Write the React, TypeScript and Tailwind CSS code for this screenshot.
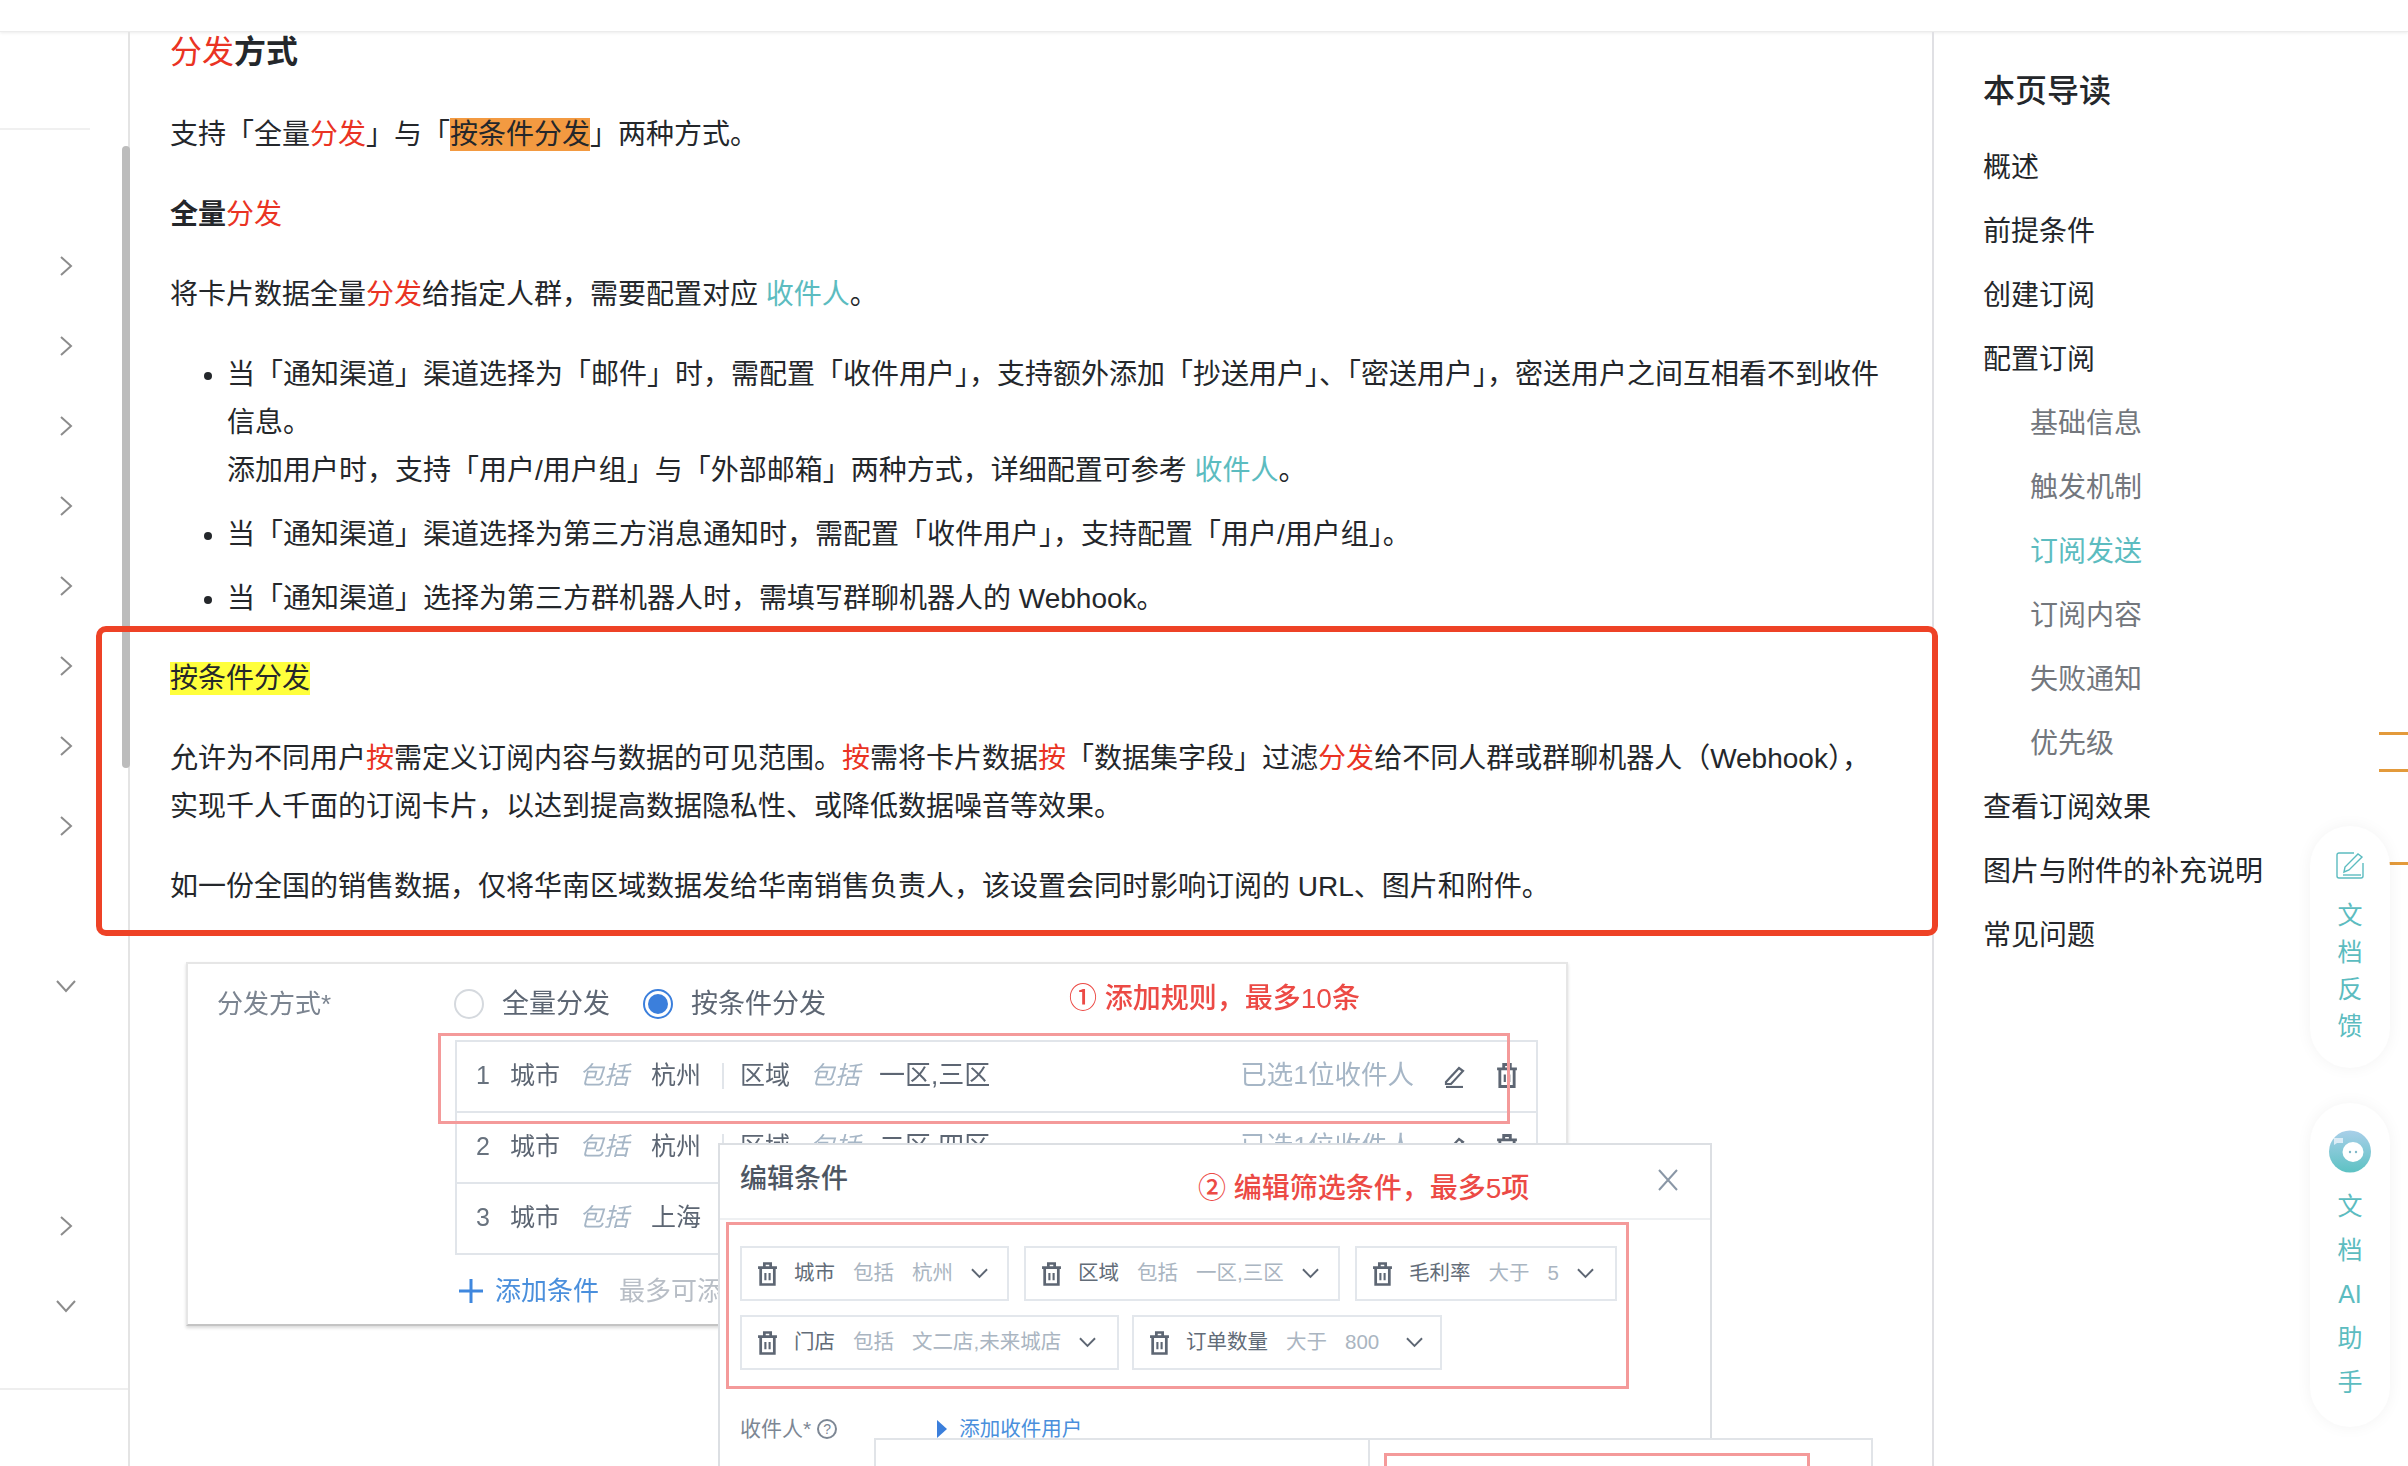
const NAV_ROWS = ["r", "r", "r", "r", "r", "r", "r", "r", "", "d", "", "", "r", "d"];

const TOC = [
  { label: "概述" },
  { label: "前提条件" },
  { label: "创建订阅" },
  { label: "配置订阅" },
  { label: "基础信息", sub: true },
  { label: "触发机制", sub: true },
  { label: "订阅发送", sub: true, active: true },
  { label: "订阅内容", sub: true },
  { label: "失败通知", sub: true },
  { label: "优先级", sub: true },
  { label: "查看订阅效果" },
  { label: "图片与附件的补充说明" },
  { label: "常见问题" },
];

const RULES = [
  { n: "1", city: "杭州", area: "一区,三区" },
  { n: "2", city: "杭州", area: "二区,四区" },
  { n: "3", city: "上海", area: "" },
];

function Red({ children }: { children: React.ReactNode }) {
  return <span className="text-[#ea3323]">{children}</span>;
}

function Link({ children }: { children: React.ReactNode }) {
  return <span className="text-[#5cbcc0]">{children}</span>;
}

function Trash({ className }: { className: string }) {
  return (
    <svg viewBox="0 0 20 24" fill="none" stroke="#5d6673" strokeWidth="2.6" className={className}>
      <path d="M1 6h18M7 5V2h6v3" />
      <path d="M3.5 7v15h13V7" />
      <path d="M8 11v7M12 11v7" strokeWidth="2" />
    </svg>
  );
}

function Pencil() {
  return (
    <svg viewBox="0 0 24 24" fill="none" stroke="#5d6673" strokeWidth="2.2" className="w-[24px] h-[24px]">
      <path d="M3 18 16 4l4 3L8 20H3z" />
      <path d="M3 23h17" />
    </svg>
  );
}

function Chevron({ dir }: { dir: string }) {
  if (dir === "d") {
    return (
      <svg viewBox="0 0 20 13" fill="none" stroke="#8c8c8c" strokeWidth="2" className="w-[20px] h-[13px] -ml-[4px]">
        <path d="M1 1l9 10 9-10" />
      </svg>
    );
  }
  return (
    <svg viewBox="0 0 13 20" fill="none" stroke="#8c8c8c" strokeWidth="2" className="w-[13px] h-[20px]">
      <path d="M1 1l10 9-10 9" />
    </svg>
  );
}

function ChipArrow() {
  return (
    <svg viewBox="0 0 18 11" fill="none" stroke="#5d6673" strokeWidth="2" className="w-[17px] h-[11px] shrink-0">
      <path d="M1 1l8 8 8-8" />
    </svg>
  );
}

function Chip({ w, label, op, value, gap }: { w: string; label: string; op: string; value: string; gap: string }) {
  return (
    <div className={`${w} h-[55px] border-2 border-[#e3e7ec] flex items-center pl-[15px] text-[20.5px] shrink-0`}>
      <Trash className="w-[21px] h-[26px] shrink-0" />
      <span className="ml-[16px] text-[#626c78]">{label}</span>
      <span className="ml-[18px] text-[#aab5c1]">{op}</span>
      <span className="ml-[18px] text-[#aab5c1] whitespace-nowrap">{value}</span>
      <span className={gap}>
        <ChipArrow />
      </span>
    </div>
  );
}

function RuleRow({ n, city, area }: { n: string; city: string; area: string }) {
  return (
    <div className="h-[71px] border-b-2 border-[#e1e5ea] flex items-center pl-[19px] text-[25px] text-[#5d6673] pb-[2px]">
      <span className="w-[34px] text-[#68727e]">{n}</span>
      <span className="w-[69px]">城市</span>
      <span className="w-[72px] italic text-[#a6b6c6]">包括</span>
      <span className="w-[71px]">{city}</span>
      {area && (
        <>
          <span className="w-[2px] h-[26px] bg-[#e1e5ea]" />
          <span className="ml-[16px] w-[70px]">区域</span>
          <span className="w-[69px] italic text-[#a6b6c6]">包括</span>
          <span className="text-[26px]">{area}</span>
          <span className="ml-auto text-[#a6b6c6] text-[26.5px]">已选1位收件人</span>
          <span className="ml-[29px]">
            <Pencil />
          </span>
          <span className="ml-[29px] mr-[18px]">
            <Trash className="w-[22px] h-[27px]" />
          </span>
        </>
      )}
    </div>
  );
}

function Screenshot() {
  return (
    <div className="relative ml-[16px] mt-[51px] w-[1382px] h-[364px] border-2 border-[#e6e6e6] border-b-[#c4c4c4] shadow-[0_2px_3px_rgba(0,0,0,0.15)] text-[25px] blur-[0.4px]">
      <div className="mt-[20px] pl-[29px] h-[40px] flex items-center">
        <span className="w-[237px] text-[#7b8490] text-[26px]">分发方式*</span>
        <span className="w-[30px] h-[30px] rounded-full border-2 border-[#d5d9de]" />
        <span className="ml-[18px] w-[105px] text-[#5d6673] text-[27px] whitespace-nowrap">全量分发</span>
        <span className="ml-[36px] w-[30px] h-[30px] rounded-full border-2 border-[#3b7fdc] flex items-center justify-center">
          <span className="w-[20px] h-[20px] rounded-full bg-[#3b7fdc]" />
        </span>
        <span className="ml-[18px] w-[131px] text-[#5d6673] text-[27px] whitespace-nowrap">按条件分发</span>
        <span className="ml-[247px] -mt-[10px] text-[#ec4a45] text-[28px] font-medium whitespace-nowrap">① 添加规则，最多10条</span>
      </div>

      <div className="ml-[267px] mt-[16px] w-[1083px] border-2 border-b-0 border-[#e1e5ea]">
        {RULES.map((r) => (
          <RuleRow key={r.n} n={r.n} city={r.city} area={r.area} />
        ))}
      </div>

      <div className="ml-[271px] mt-[18px] h-[36px] flex items-center text-[26px] whitespace-nowrap">
        <svg viewBox="0 0 24 24" stroke="#3f87de" strokeWidth="3" className="w-[24px] h-[24px] shrink-0">
          <path d="M12 0v24M0 12h24" />
        </svg>
        <span className="ml-[12px] text-[#4a8fdc]">添加条件</span>
        <span className="ml-[20px] text-[#b8bec6]">最多可添加10条</span>
      </div>

      {/* red mark on the first rule */}
      <div className="absolute left-[250px] top-[69px] w-[1072px] h-[91px] border-[3px] border-[#f49a9a]" />

      {/* edit dialog, lies over the rule list */}
      <div className="absolute left-[530px] top-[179px] w-[994px] h-[400px] bg-white border-2 border-[#dcdfe3]">
        <div className="h-[75px] border-b-2 border-[#eef0f2] flex items-center pl-[20px] pb-[4px]">
          <span className="w-[458px] text-[27px] font-medium text-[#4d5662]">编辑条件</span>
          <span className="mt-[18px] text-[28px] font-medium text-[#ec4a45] whitespace-nowrap">② 编辑筛选条件，最多5项</span>
          <svg viewBox="0 0 20 22" fill="none" stroke="#8a97a6" strokeWidth="2" className="ml-[129px] w-[20px] h-[22px]">
            <path d="M1 1l18 20M19 1 1 21" />
          </svg>
        </div>
        <div className="pl-[20px] pt-[26px] flex flex-col gap-[14px]">
          <div className="flex gap-[15px]">
            <Chip w="w-[269px]" label="城市" op="包括" value="杭州" gap="ml-[18px]" />
            <Chip w="w-[316px]" label="区域" op="包括" value="一区,三区" gap="ml-[18px]" />
            <Chip w="w-[262px]" label="毛利率" op="大于" value="5" gap="ml-[18px]" />
          </div>
          <div className="flex gap-[13px]">
            <Chip w="w-[379px]" label="门店" op="包括" value="文二店,未来城店" gap="ml-[18px]" />
            <Chip w="w-[310px]" label="订单数量" op="大于" value="800" gap="ml-[27px]" />
          </div>
        </div>
        <div className="mt-[39px] pl-[20px] h-[40px] flex items-center text-[21px] text-[#7d8794]">
          <span>收件人*</span>
          <span className="ml-[6px] w-[20px] h-[20px] rounded-full border-2 border-[#7d8794] flex items-center justify-center text-[14px]">?</span>
          <span className="ml-[100px] w-0 h-0 border-y-[9px] border-y-transparent border-l-[10px] border-l-[#3b7fdc]" />
          <span className="ml-[12px] text-[#4a8fdc] text-[20.5px]">添加收件用户</span>
        </div>

        <div className="absolute left-[154px] top-[293px] w-[999px] h-[60px] bg-white border-2 border-[#e1e4e8] flex">
          <div className="w-[494px] border-r-2 border-[#e1e4e8]" />
          <div className="ml-[14px] mt-[13px] w-[426px] h-[60px] border-[3px] border-[#f49a9a]" />
        </div>

        <div className="absolute left-[6px] top-[77px] w-[903px] h-[167px] border-[3px] border-[#f49a9a]" />
      </div>
    </div>
  );
}

function FloatButtons() {
  return (
    <>
      <div className="absolute left-[2379px] top-[732px] w-[29px] h-[3px] bg-[#e39a3b]" />
      <div className="absolute left-[2379px] top-[769px] w-[29px] h-[3px] bg-[#e39a3b]" />
      <div className="absolute left-[2379px] top-[862px] w-[29px] h-[3px] bg-[#e39a3b]" />

      <div className="absolute left-[2310px] top-[826px] w-[80px] h-[242px] rounded-[40px] bg-white shadow-[0_0_16px_rgba(0,0,0,0.05)] flex flex-col items-center pt-[26px] text-[25px] leading-[37px] text-[#5cbcc0]">
        <svg viewBox="0 0 28 27" fill="none" stroke="#5cbcc0" strokeWidth="1.4" className="w-[28px] h-[27px] mb-[18px]">
          <path d="M18 1H3a2 2 0 0 0-2 2v21a2 2 0 0 0 2 2h22a2 2 0 0 0 2-2V11" />
          <path d="M8 20l1-5L22 2l4 3-13 13z" />
          <path d="M7 23h18" />
        </svg>
        <span>文</span>
        <span>档</span>
        <span>反</span>
        <span>馈</span>
      </div>

      <div className="absolute left-[2310px] top-[1103px] w-[80px] h-[324px] rounded-[40px] bg-white shadow-[0_0_16px_rgba(0,0,0,0.05)] flex flex-col items-center pt-[27px] text-[25px] leading-[44px] text-[#5cbcc0]">
        <svg viewBox="0 0 42 43" className="w-[42px] h-[43px] mb-[11px]">
          <defs>
            <linearGradient id="aiGrad" x1="0" y1="0" x2="0" y2="1">
              <stop offset="0" stopColor="#a9cfe9" />
              <stop offset="1" stopColor="#5dc2c3" />
            </linearGradient>
          </defs>
          <circle cx="21" cy="21.5" r="21" fill="url(#aiGrad)" />
          <ellipse cx="24" cy="22" rx="10.5" ry="10" fill="#fff" />
          <path d="M5 8h9v5H8l-3 2z" fill="#dcecf6" />
          <circle cx="21" cy="22" r="1.2" fill="#7fb8c8" />
          <circle cx="27" cy="22" r="1.2" fill="#7fb8c8" />
        </svg>
        <span>文</span>
        <span>档</span>
        <span>AI</span>
        <span>助</span>
        <span>手</span>
      </div>
    </>
  );
}

export default function App() {
  return (
    <div className="relative w-[2408px] h-[1466px] overflow-hidden bg-white text-[#24272b] text-[28px] font-['Liberation_Sans','Noto_Sans_CJK_SC',sans-serif]">
      <div className="h-[32px] border-b border-[#ececec] shadow-[0_1px_3px_rgba(0,0,0,0.08)]" />

      <div className="flex h-[1434px]">
        {/* left nav */}
        <div className="relative w-[130px] shrink-0 border-r-2 border-[#e4e4e4]">
          <div className="mt-[96px] w-[90px] border-t-2 border-[#f0f0f0]" />
          <div className="mt-[96px]">
            {NAV_ROWS.map((dir, i) => (
              <div key={i} className="h-[80px] flex items-center pl-[60px]">
                {dir && <Chevron dir={dir} />}
              </div>
            ))}
          </div>
          <div className="mt-[42px] border-t-2 border-[#eeeeee]" />
          <div className="absolute right-[-2px] top-[114px] w-[8px] h-[622px] rounded-[4px] bg-[#bcbcbc]" />
        </div>

        {/* article */}
        <div className="w-[1804px] shrink-0 border-r-2 border-[#e0e0e4] pl-[40px] pr-[44px]">
          <h2 className="text-[32px] leading-[40px] font-semibold">
            <span className="font-normal text-[#ea3323]">分发</span>方式
          </h2>
          <p className="mt-[39px] leading-[48px]">
            支持「全量<Red>分发</Red>」与「<span className="inline-block h-[33px] leading-[33px] bg-[#f39a41]">按条件分发</span>」两种方式。
          </p>
          <p className="mt-[32px] leading-[48px] font-semibold">
            全量<span className="font-normal text-[#ea3323]">分发</span>
          </p>
          <p className="mt-[32px] leading-[48px]">
            将卡片数据全量<Red>分发</Red>给指定人群，需要配置对应 <Link>收件人</Link>。
          </p>
          <ul className="mt-[32px] list-disc pl-[57px] leading-[48px]">
            <li>
              当「通知渠道」渠道选择为「邮件」时，需配置「收件用户」，支持额外添加「抄送用户」、「密送用户」，密送用户之间互相看不到收件
              <br />
              信息。
              <br />
              添加用户时，支持「用户/用户组」与「外部邮箱」两种方式，详细配置可参考 <Link>收件人</Link>。
            </li>
            <li className="mt-[16px]">当「通知渠道」渠道选择为第三方消息通知时，需配置「收件用户」，支持配置「用户/用户组」。</li>
            <li className="mt-[16px]">当「通知渠道」选择为第三方群机器人时，需填写群聊机器人的 Webhook。</li>
          </ul>
          <p className="mt-[32px] leading-[48px] font-semibold">
            <span className="inline-block h-[33px] leading-[33px] font-normal bg-[#ffff3c]">按条件分发</span>
          </p>
          <p className="mt-[32px] leading-[48px]">
            允许为不同用户<Red>按</Red>需定义订阅内容与数据的可见范围。<Red>按</Red>需将卡片数据<Red>按</Red>「数据集字段」过滤<Red>分发</Red>给不同人群或群聊机器人（Webhook），
            <br />
            实现千人千面的订阅卡片，以达到提高数据隐私性、或降低数据噪音等效果。
          </p>
          <p className="mt-[32px] leading-[48px]">
            如一份全国的销售数据，仅将华南区域数据发给华南销售负责人，该设置会同时影响订阅的 URL、图片和附件。
          </p>
          <Screenshot />
        </div>

        {/* page guide */}
        <div className="pl-[49px]">
          <div className="mt-[35px] h-[48px] leading-[48px] text-[32px] font-medium">本页导读</div>
          <div className="mt-[21px]">
            {TOC.map((item) => (
              <div
                key={item.label}
                className={`h-[64px] leading-[64px] whitespace-nowrap ${item.sub ? "pl-[47px]" : ""} ${
                  item.active ? "text-[#5cbcc0]" : item.sub ? "text-[#73777d]" : ""
                }`}
              >
                {item.label}
              </div>
            ))}
          </div>
        </div>
      </div>

      {/* red frame drawn over the article */}
      <div className="absolute left-[96px] top-[626px] w-[1842px] h-[310px] border-[6px] border-[#ee4226] rounded-[10px]" />

      <FloatButtons />
    </div>
  );
}
